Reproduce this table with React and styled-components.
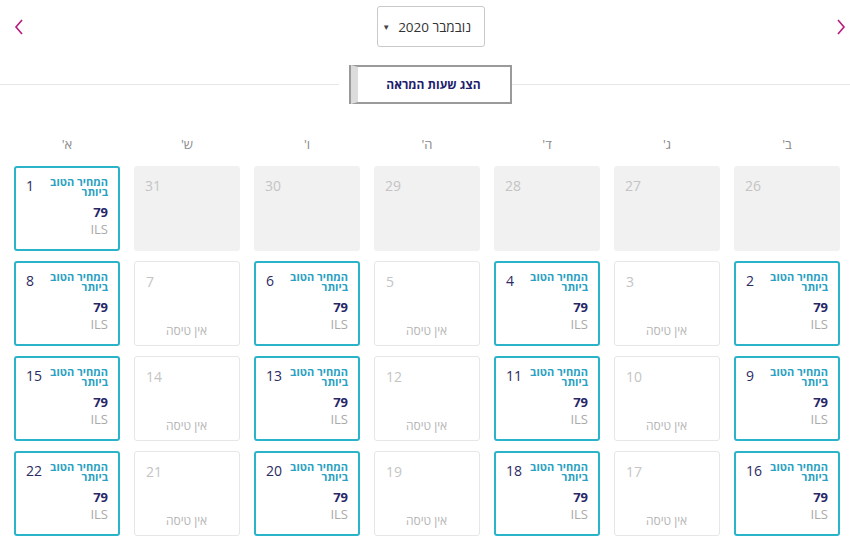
import React from 'react';
import styled, { createGlobalStyle } from 'styled-components';

const GlobalStyle = createGlobalStyle`
    body {
        margin: 0;
        background: #fff;
        font-family: "Open Sans", "Liberation Sans", sans-serif;
    }
`;

const Page = styled.div`
    direction: rtl;
    width: 850px;
    height: 540px;
    overflow: hidden;
`;

const Header = styled.div`
    display: flex;
    justify-content: space-between;
    align-items: center;
    padding: 6px 3px 0 13px;
    height: 41px;
`;

const Arrow = styled.button`
    border: none;
    background: none;
    padding: 0;
    width: 12px;
    height: 18px;
    display: flex;
    align-items: center;
    justify-content: center;
    cursor: pointer;
`;

const MonthSelect = styled.div`
    width: 108px;
    height: 41px;
    box-sizing: border-box;
    border: 1px solid #c9c9c9;
    border-radius: 3px;
    display: flex;
    align-items: center;
    gap: 8px;
    padding-right: 13px;
    margin-left: 2px;
    font-size: 13.5px;
    white-space: nowrap;
    color: #333;
    .caret {
        font-size: 8px;
        color: #444;
    }
`;

const ButtonRow = styled.div`
    display: flex;
    align-items: center;
    margin-top: 18px;
    &::before, &::after {
        content: '';
        flex: 1;
        border-top: 1px solid #e6e6e6;
    }
`;

const ShowTimes = styled.button`
    width: 161px;
    height: 39px;
    box-sizing: border-box;
    border: 2px solid #9a9a9a;
    border-left: 7px solid #dcdcdc;
    box-shadow: -2px 0 0 #9a9a9a;
    background: #fff;
    font-family: inherit;
    font-size: 12px;
    font-weight: 700;
    color: #1d1d6b;
    margin-left: 12px;
`;

const Grid = styled.div`
    display: grid;
    grid-template-columns: repeat(7, 106px);
    column-gap: 14px;
    row-gap: 10px;
    padding: 0 10px 0 0;
`;

const DayName = styled.div`
    text-align: center;
    font-size: 13px;
    color: #8a8a8a;
    height: 20px;
    line-height: 20px;
    margin-top: 30px;
    margin-bottom: 2px;
`;

const Cell = styled.div`
    height: 85px;
    box-sizing: border-box;
    border-radius: 3px;
    border: ${p => p.$kind === 'active' ? '2px solid #2ab4ca' : p.$kind === 'none' ? '1px solid #e6e6e6' : 'none'};
    background: ${p => p.$kind === 'past' ? '#f1f1f1' : '#fff'};
    display: flex;
    flex-direction: column;
    padding: ${p => p.$kind === 'active' ? '6px 10px 0 10px' : '8px 12px 0 11px'};
`;

const Top = styled.div`
    display: flex;
    justify-content: space-between;
    align-items: flex-start;
`;

const DayNum = styled.span`
    font-size: 14px;
    line-height: 20px;
    margin-top: 2px;
    color: ${p => p.$muted ? '#c4c4c4' : '#2b2b63'};
`;

const Best = styled.span`
    font-size: 11px;
    font-weight: 700;
    line-height: 10px;
    color: #2aa1c2;
    width: 58px;
    margin-top: 3px;
`;

const Price = styled.div`
    margin-top: 7px;
    font-size: 13px;
    font-weight: 700;
    color: #262668;
    line-height: 17px;
`;

const Currency = styled.div`
    font-size: 13px;
    color: #a9a9a9;
    line-height: 17px;
`;

const NoFlight = styled.div`
    margin-top: auto;
    margin-bottom: 6px;
    text-align: center;
    font-size: 12px;
    color: #b5b5b5;
`;

const Chevron = ({ dir }) => (
    <svg width="10" height="16" viewBox="0 0 10 16">
        <path d={dir === 'right' ? 'M2 1 L8 8 L2 15' : 'M8 1 L2 8 L8 15'} fill="none" stroke="#b8197f" strokeWidth="1.6" />
    </svg>
);

const dayNames = ["ב'", "ג'", "ד'", "ה'", "ו'", "ש'", "א'"];

const rows = [
    [26, 27, 28, 29, 30, 31].map(d => ({ d, kind: 'past' })).concat([{ d: 1, kind: 'active' }]),
];
for (let start = 2; start <= 16; start += 7) {
    rows.push(Array.from({ length: 7 }, (_, i) => ({ d: start + i, kind: i % 2 === 0 ? 'active' : 'none' })));
}

const DayCell = ({ d, kind }) => (
    <Cell $kind={kind}>
        {kind === 'active' ? (
            <>
                <Top>
                    <Best>המחיר הטוב ביותר</Best>
                    <DayNum>{d}</DayNum>
                </Top>
                <Price>79</Price>
                <Currency>ILS</Currency>
            </>
        ) : (
            <>
                <Top>
                    <span />
                    <DayNum $muted>{d}</DayNum>
                </Top>
                {kind === 'none' && <NoFlight>אין טיסה</NoFlight>}
            </>
        )}
    </Cell>
);

const App = () => (
    <Page>
        <GlobalStyle />
        <Header>
            <Arrow><Chevron dir="right" /></Arrow>
            <MonthSelect>
                <span>נובמבר 2020</span>
                <span className="caret">▼</span>
            </MonthSelect>
            <Arrow><Chevron dir="left" /></Arrow>
        </Header>
        <ButtonRow>
            <ShowTimes>הצג שעות המראה</ShowTimes>
        </ButtonRow>
        <Grid>
            {dayNames.map(n => <DayName key={n}>{n}</DayName>)}
            {rows.flat().map(c => <DayCell key={c.d + c.kind} {...c} />)}
        </Grid>
    </Page>
);

export default App;
